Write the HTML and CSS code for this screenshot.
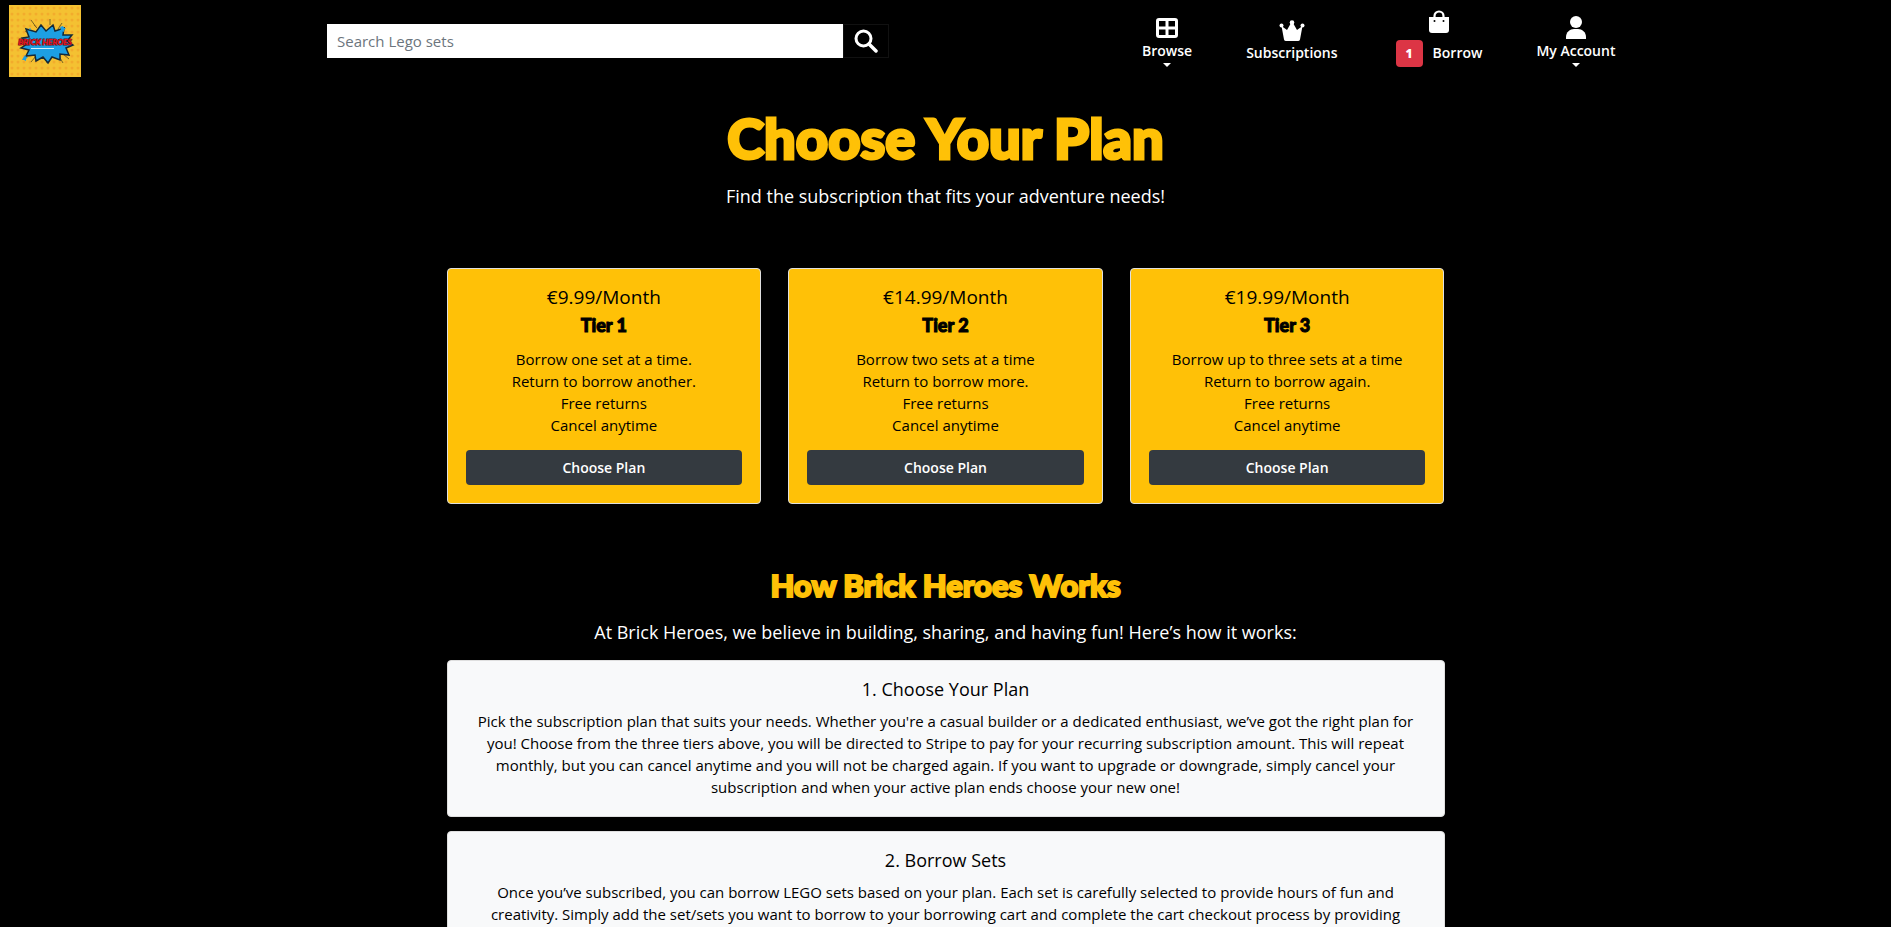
FILE: index.html
```html
<!DOCTYPE html>
<html lang="en">
<head>
<meta charset="utf-8">
<meta name="viewport" content="width=device-width, initial-scale=1">
<title>Brick Heroes - Subscriptions</title>
<link rel="stylesheet" href="styles.css">
</head>
<body>
<header class="topbar">
  <a class="logo" href="#" aria-label="Brick Heroes">
    <svg viewBox="0 0 72 72" width="72" height="72">
      <defs><pattern id="dots" width="6" height="6" patternUnits="userSpaceOnUse"><circle cx="3" cy="3" r="1.5" fill="#f2ac2c"/></pattern></defs>
      <rect width="72" height="72" fill="#f4c132"/>
      <rect width="72" height="72" fill="url(#dots)"/>
      <g stroke="#7a6420" stroke-width="1"><path d="M22 15l5 7M25 20l3 3M41 14v6M53 18l-4 6M56 22l-3 3M17 51l6-4M22 57l5-6M38 53v5M50 51l4 7M54 49l6 5M16 26l5 3"/></g>
      <path d="M32 20l5 6 7-6 2 6 9-3-1 7 9 0-5 6 6 4-7 3 3 7-9-1 0 6-8-3-4 6-5-6-7 4-1-6-9 1 3-6-8-2 6-4-5-6 7-1-3-8 10 3z" fill="#1d9fe3" stroke="#142a38" stroke-width="1.5"/>
      <path d="M54 21l1 2 2 0-2 2 0 2-2-1-2 0 1-2-1-2zM16 50l1 2 2 0-2 2 0 2-2-1-2 0 1-2zM21 23l1 1-1 1-1-1z" fill="#1d9fe3"/>
      <path d="M22 43.500h23" stroke="#d5eef9" stroke-width="1"/>
      <text x="36" y="40" text-anchor="middle" class="logo-text">BRICK HEROES</text>
    </svg>
  </a>
  <form class="search" role="search">
    <input class="search-input" type="search" placeholder="Search Lego sets" aria-label="Search Lego sets">
    <button class="search-button" type="button" aria-label="Search">
      <svg viewBox="0 0 24 24" width="24" height="24" fill="none" stroke="#fff" stroke-width="3" stroke-linecap="round"><circle cx="9.500" cy="9.500" r="7.500"/><path d="M15 15l7 7" stroke-width="3.500"/></svg>
    </button>
  </form>
  <nav class="menu">
    <a class="menu-item" href="#">
      <svg viewBox="0 0 24 24" width="24" height="24"><path fill="#fff" fill-rule="evenodd" d="M4 2h16a3 3 0 0 1 3 3v14a3 3 0 0 1-3 3H4a3 3 0 0 1-3-3V5a3 3 0 0 1 3-3zM4 5v5.500h6.500V5zM13.500 5v5.500H20V5zM4 13.500V19h6.500v-5.500zM13.500 13.500V19H20v-5.500z"/></svg>
      <span>Browse</span><i class="caret"></i>
    </a>
    <a class="menu-item" href="#">
      <svg viewBox="0 0 26 24" width="26" height="24"><g fill="#fff"><circle cx="2.500" cy="7.500" r="2"/><circle cx="13" cy="4.500" r="2.300"/><circle cx="23.500" cy="7.500" r="2"/><path d="M2.500 8L8 12l4-7h2l4 7 5.500-4L21 21.500q-.4 1.500-2 1.500H7q-1.600 0-2-1.500z"/></g></svg>
      <span>Subscriptions</span>
    </a>
    <a class="menu-item menu-item-cart" href="#">
      <svg viewBox="0 0 24 24" width="24" height="24"><path d="M7.500 9V6a4.500 4.500 0 0 1 9 0v3" fill="none" stroke="#fff" stroke-width="2.200"/><path d="M2 7h20v13a3 3 0 0 1-3 3H5a3 3 0 0 1-3-3z" fill="#fff"/><circle cx="7.500" cy="11" r="1" fill="#000"/><circle cx="16.500" cy="11" r="1" fill="#000"/></svg>
      <span class="cart-row"><b class="badge">1</b>Borrow</span>
    </a>
    <a class="menu-item" href="#">
      <svg viewBox="0 0 24 24" width="24" height="24" fill="#fff"><circle cx="12" cy="6" r="6"/><path d="M2 23v-2c0-5 4-8 8-8h4c4 0 8 3 8 8v2z"/></svg>
      <span>My Account</span><i class="caret"></i>
    </a>
  </nav>
</header>
<main class="container">
  <section>
    <h1 class="title">Choose Your Plan</h1>
    <p class="lead">Find the subscription that fits your adventure needs!</p>
    <div class="plans">
      <article class="plan">
        <p class="price">€9.99/Month</p>
        <h2 class="tier">Tier 1</h2>
        <p class="features">Borrow one set at a time.<br>Return to borrow another.<br>Free returns<br>Cancel anytime</p>
        <button class="choose" type="button">Choose Plan</button>
      </article>
      <article class="plan">
        <p class="price">€14.99/Month</p>
        <h2 class="tier">Tier 2</h2>
        <p class="features">Borrow two sets at a time<br>Return to borrow more.<br>Free returns<br>Cancel anytime</p>
        <button class="choose" type="button">Choose Plan</button>
      </article>
      <article class="plan">
        <p class="price">€19.99/Month</p>
        <h2 class="tier">Tier 3</h2>
        <p class="features">Borrow up to three sets at a time<br>Return to borrow again.<br>Free returns<br>Cancel anytime</p>
        <button class="choose" type="button">Choose Plan</button>
      </article>
    </div>
  </section>
  <section class="how">
    <h2 class="subtitle">How Brick Heroes Works</h2>
    <p class="lead">At Brick Heroes, we believe in building, sharing, and having fun! Here’s how it works:</p>
    <article class="step">
      <h3 class="step-title">1. Choose Your Plan</h3>
      <p class="step-text">Pick the subscription plan that suits your needs. Whether you're a casual builder or a dedicated enthusiast, we’ve got the right plan for<br>you! Choose from the three tiers above, you will be directed to Stripe to pay for your recurring subscription amount. This will repeat<br>monthly, but you can cancel anytime and you will not be charged again. If you want to upgrade or downgrade, simply cancel your<br>subscription and when your active plan ends choose your new one!</p>
    </article>
    <article class="step">
      <h3 class="step-title">2. Borrow Sets</h3>
      <p class="step-text">Once you’ve subscribed, you can borrow LEGO sets based on your plan. Each set is carefully selected to provide hours of fun and<br>creativity. Simply add the set/sets you want to borrow to your borrowing cart and complete the cart checkout process by providing</p>
    </article>
  </section>
</main>
</body>
</html>
```
FILE: styles.css
```css
* { box-sizing: border-box; }
body {
  margin: 0;
  height: 100vh;
  overflow: hidden;
  background: #000;
  color: #000;
  font-family: "Open Sans", "Noto Sans", sans-serif;
  font-size: 15px;
  line-height: 22px;
}
h1, h2, h3, p { margin: 0; }
button, input { font: inherit; }

.topbar {
  display: grid;
  grid-template-columns: 318fr 815fr 740fr;
  align-items: center;
  padding: 5px 9px;
}
.logo { display: block; width: 72px; height: 72px; }
.logo svg { display: block; }
.logo-text {
  font: italic 900 8px Lato, sans-serif;
  fill: #e8151f;
  stroke: #5c0d12;
  stroke-width: 1px;
  paint-order: stroke;
}
.search { display: flex; width: 69%; }
.search-input {
  flex: 1;
  min-width: 0;
  height: 34px;
  padding: 0 10px;
  border: 0;
  background: #fff;
  color: #495057;
}
.search-input::placeholder { color: #6c757d; opacity: 1; }
.search-button {
  display: flex;
  align-items: center;
  justify-content: center;
  width: 46px;
  height: 34px;
  padding: 0;
  border: 1px solid #111;
  background: #000;
}
.menu { display: flex; align-items: center; gap: 54px; }
.menu-item {
  display: flex;
  flex-direction: column;
  align-items: center;
  color: #fff;
  font-size: 14px;
  font-weight: 600;
  text-decoration: none;
  white-space: nowrap;
}
.caret {
  margin-top: 1px;
  border: 4px solid transparent;
  border-top-color: #fff;
  border-bottom: 0;
}
.menu-item-cart { gap: 6px; margin-left: 4px; padding-bottom: 6px; }
.cart-row { display: flex; align-items: center; gap: 10px; }
.badge {
  width: 27px;
  border-radius: 4px;
  background: #dc3545;
  font-size: 12px;
  line-height: 27px;
  text-align: center;
}

.container {
  width: 100%;
  max-width: 1026px;
  margin: 0 auto;
  padding: 20px 14px 0;
  text-align: center;
}
.title, .subtitle, .tier { font-family: Lato, sans-serif; font-weight: 900; }
.title {
  color: #ffc107;
  font-size: 56px;
  line-height: 72px;
  -webkit-text-stroke: 3px #ffc107;
}
.lead {
  padding: 8px 0 14px;
  color: #fff;
  font-size: 18px;
  line-height: 28px;
}
.plans {
  display: grid;
  grid-template-columns: repeat(3, 1fr);
  gap: 27px;
  margin-top: 44px;
}
.plan {
  padding: 17px 18px 18px;
  border: 1px solid #dfdfdf;
  border-radius: 4px;
  background: #ffc107;
}
.price { font-size: 19px; line-height: 22px; }
.tier {
  margin: 6px 0 12px;
  font-size: 18px;
  line-height: 22px;
  -webkit-text-stroke: 1px #000;
}
.choose {
  width: 100%;
  height: 35px;
  margin-top: 14px;
  border: 0;
  border-radius: 4px;
  background: #343a40;
  color: #fff;
  font-size: 14px;
  font-weight: 600;
}
.how { margin-top: 64px; }
.subtitle {
  margin-bottom: 8px;
  color: #ffc107;
  font-size: 31px;
  line-height: 34px;
  -webkit-text-stroke: 2px #ffc107;
}
.step {
  margin-bottom: 14px;
  padding: 17px 18px 18px;
  border: 1px solid #dfdfdf;
  border-radius: 4px;
  background: #f8f9fa;
}
.step-title { margin-bottom: 10px; font-size: 18px; font-weight: 400; line-height: 22px; }
```
